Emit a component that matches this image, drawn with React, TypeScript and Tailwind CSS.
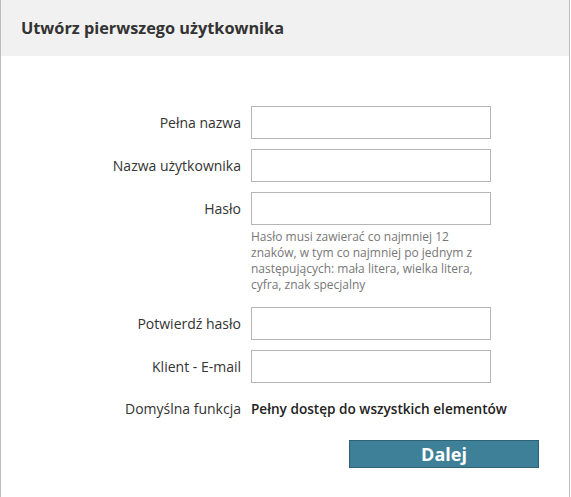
import React from "react";

const Row = ({ label }: { label: string }) => (
  <div className="flex items-center">
    <div className="w-[240px] shrink-0 text-right text-[14px] text-[#333]">{label}</div>
    <div className="ml-[10px] h-[33px] w-[240px] border border-[#b5b5b5] bg-white" />
  </div>
);

export default function App() {
  return (
    <div className="h-[497px] w-[570px] border-x border-[#bdbdbd] bg-white font-['Open_Sans',sans-serif]">
      <div className="flex h-[56px] items-center bg-[#f1f1f1] pl-[20px]">
        <h1 className="text-[16.3px] font-bold text-[#333]">Utwórz pierwszego użytkownika</h1>
      </div>
      <div className="flex flex-col pt-[50px]">
        <div className="flex flex-col gap-[10px]">
          <Row label="Pełna nazwa" />
          <Row label="Nazwa użytkownika" />
          <Row label="Hasło" />
        </div>
        <div className="ml-[250px] mt-[4px] w-[240px] text-[12px] leading-[16px] text-[#777]">
          Hasło musi zawierać co najmniej 12 znaków, w tym co najmniej po jednym z następujących: mała litera, wielka litera, cyfra, znak specjalny
        </div>
        <div className="mt-[14px] flex flex-col gap-[10px]">
          <Row label="Potwierdź hasło" />
          <Row label="Klient - E-mail" />
        </div>
        <div className="mt-[16px] flex items-center">
          <div className="w-[240px] shrink-0 text-right text-[14px] leading-[20px] text-[#333]">Domyślna funkcja</div>
          <div className="ml-[10px] text-[13.6px] font-semibold leading-[20px] text-[#222]">Pełny dostęp do wszystkich elementów</div>
        </div>
        <div className="mt-[21px] flex">
          <button className="ml-[348px] flex h-[28px] w-[190px] items-center justify-center border border-[#2e6275] bg-[#3f8099] text-[18px] font-bold text-white">
            Dalej
          </button>
        </div>
      </div>
    </div>
  );
}
